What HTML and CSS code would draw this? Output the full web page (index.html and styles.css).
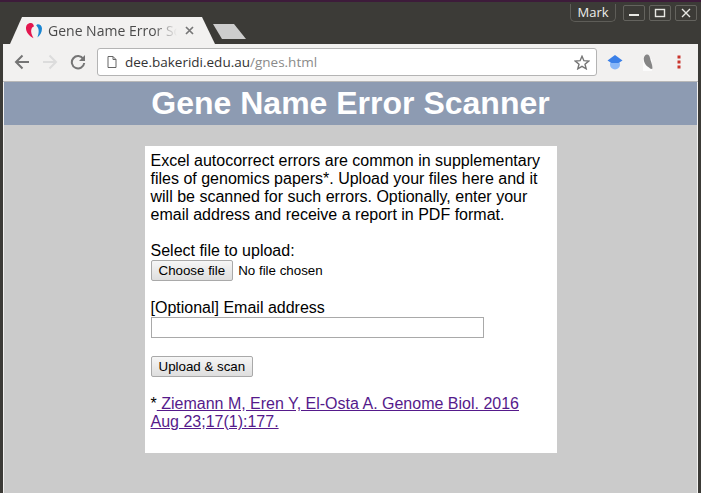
FILE: index.html
```html
<!DOCTYPE html>
<html lang="en">
<head>
	<meta charset="UTF-8" />
	<title>Gene Name Error Scanner</title>
	<link rel="stylesheet" href="styles.css">
</head>
<body>
	<div class="window">
		<div class="topbar">
			<div class="tabs">
				<div class="tab">
					<svg class="favicon" width="17" height="16" viewBox="0 0 17 16">
						<path d="M5 0C1.5 0 0 2.5 0 5.2C0 9 3 13 7.500 15.200C5.500 11.500 4.600 8.500 5.400 6.200C5.900 4.600 7 4 8 3.600C7.600 1.400 6.600 0 5 0Z" fill="#e3174f"/>
						<path d="M11.600 1.200C13.500 1 16 2.400 16 5.600C16 9.400 14 12.600 11.400 14.600C12.400 11.400 13 9 12.500 6.600C12.200 4.800 11.200 3 10.200 2.400C10.500 1.800 11 1.300 11.600 1.200Z" fill="#1b86d2"/>
					</svg>
					<span class="tab-title">Gene Name Error Scanner</span>
					<svg class="tab-close" width="9" height="9" viewBox="0 0 9 9">
						<path d="M1 1L8 8M8 1L1 8" stroke="#777" stroke-width="1.700"/>
					</svg>
				</div>
				<div class="newtab"></div>
			</div>
			<div class="controls">
				<div class="user">Mark</div>
				<div class="winbtns">
					<div class="winbtn">
						<svg width="12" height="12" viewBox="0 0 12 12"><path d="M1 8H11" stroke="#e8e8e4" stroke-width="2"/></svg>
					</div>
					<div class="winbtn">
						<svg width="12" height="12" viewBox="0 0 12 12"><rect x="1.500" y="2.500" width="9" height="7" fill="none" stroke="#e8e8e4" stroke-width="1.400"/></svg>
					</div>
					<div class="winbtn">
						<svg width="12" height="12" viewBox="0 0 12 12"><path d="M2 2L10 10M10 2L2 10" stroke="#e8e8e4" stroke-width="1.400"/></svg>
					</div>
				</div>
			</div>
		</div>

		<div class="toolbar">
			<svg class="navicon" width="16" height="16" viewBox="0 0 16 16">
				<path d="M15 8H2.500M8.500 1.500L2 8L8.500 14.500" fill="none" stroke="#757575" stroke-width="2"/>
			</svg>
			<svg class="navicon" width="16" height="16" viewBox="0 0 16 16">
				<path d="M1 8H13.500M7.500 1.500L14 8L7.500 14.500" fill="none" stroke="#dcdcdc" stroke-width="2"/>
			</svg>
			<svg class="navicon" width="16" height="16" viewBox="0 0 16 16">
				<path d="M13.300 5A6.200 6.200 0 1 0 14.200 9" fill="none" stroke="#757575" stroke-width="2"/>
				<path d="M15 1V7H9Z" fill="#757575"/>
			</svg>
			<div class="omnibox">
				<svg class="pageicon" width="10" height="12" viewBox="0 0 10 12">
					<path d="M1 .5H6L9 3.500V11.500H1ZM6 .5V3.500H9" fill="#fff" stroke="#666" stroke-width="1"/>
				</svg>
				<span class="url">dee.bakeridi.edu.au<span class="url-path">/gnes.html</span></span>
				<svg class="star" width="16" height="15" viewBox="0 0 16 15">
					<path d="M8 1.300L9.900 5.700L14.700 6.100L11 9.200L12.200 13.800L8 11.400L3.800 13.800L5 9.200L1.300 6.100L6.100 5.700Z" fill="none" stroke="#757575" stroke-width="1.400"/>
				</svg>
			</div>
			<div class="exts">
				<svg class="ext" width="16" height="15" viewBox="0 0 16 15">
					<circle cx="8" cy="9.500" r="5" fill="#8ab8f8"/>
					<path d="M8 0L15.500 5.500L11.500 8H4.500L.5 5.500Z" fill="#3b80e8"/>
				</svg>
				<svg class="ext" width="12" height="17" viewBox="0 0 12 17">
					<rect x="1" y="5" width="9" height="12" fill="#fbfbfb"/>
					<path d="M4.500 .5C6.500 0 7.500 1.500 8 4C8.500 7 10.500 10 10.500 14.500C9 15.500 8 14.500 7 13.500C4 12 1.500 8 1.800 4.500C2 2.500 3 1 4.500 .5Z" fill="#858585"/>
				</svg>
				<svg class="ext" width="4" height="14" viewBox="0 0 4 14">
					<rect x="0.500" y="0.500" width="3" height="3" fill="#c9352c"/>
					<rect x="0.500" y="5.500" width="3" height="3" fill="#c9352c"/>
					<rect x="0.500" y="10.500" width="3" height="3" fill="#c9352c"/>
				</svg>
			</div>
		</div>

		<div class="page">
			<h1 class="banner">Gene Name Error Scanner</h1>
			<div class="card">
				<p class="intro">Excel autocorrect errors are common in supplementary files of genomics papers*. Upload your files here and it will be scanned for such errors. Optionally, enter your email address and receive a report in PDF format.</p>
				<div class="field">
					<div>Select file to upload:</div>
					<div class="filerow">
						<button class="btn" type="button">Choose file</button>
						<span class="nofile">No file chosen</span>
					</div>
				</div>
				<div class="field">
					<label class="email-label" for="email">[Optional] Email address</label>
					<input class="email" id="email" type="text" />
				</div>
				<button class="btn upload" type="button">Upload &amp; scan</button>
				<p class="ref">*<a href="#"> Ziemann M, Eren Y, El-Osta A. Genome Biol. 2016 Aug 23;17(1):177.</a></p>
			</div>
		</div>
	</div>
</body>
</html>
```

FILE: styles.css
```css
html,body{
	margin:0;
	padding:0;
}
body{
	font-family:"Liberation Sans",Arial,sans-serif;
	font-size:16px;
	background:#3c3b37;
}
.window{
	width:701px;
	height:493px;
	box-sizing:border-box;
	display:flex;
	flex-direction:column;
	padding:0 3px;
	background:#3c3b37;
	border-top:2px solid #3d1b3a;
	overflow:hidden;
}

/* title bar and tabs */
.topbar{
	height:42px;
	display:flex;
	justify-content:space-between;
	flex-shrink:0;
}
.tabs{
	display:flex;
	align-items:flex-end;
	padding-left:7px;
}
.tab{
	width:205px;
	height:27px;
	box-sizing:border-box;
	display:flex;
	align-items:center;
	padding:0 18px 0 16px;
	background:#f2f1f0;
	clip-path:polygon(0 100%,12px 0,192px 0,100% 100%);
	font-family:"Open Sans","Noto Sans",sans-serif;
	font-size:14px;
	color:#4b4b4b;
}
.favicon{
	flex-shrink:0;
	margin-right:5px;
}
.tab-title{
	width:129px;
	flex-shrink:0;
	overflow:hidden;
	white-space:nowrap;
	-webkit-mask-image:linear-gradient(to right,#000 105px,transparent 129px);
	mask-image:linear-gradient(to right,#000 105px,transparent 129px);
}
.tab-close{
	margin-left:8px;
	flex-shrink:0;
}
.newtab{
	width:33px;
	height:15px;
	margin:0 0 5px -2px;
	background:#cdcdcd;
	clip-path:polygon(0 0,21px 0,100% 100%,9px 100%);
}
.controls{
	display:flex;
	align-items:flex-start;
	padding:2px 1px 0 0;
}
.user{
	width:46px;
	height:18px;
	box-sizing:border-box;
	border:1px solid #5e5d58;
	border-top:0;
	border-radius:0 0 5px 5px;
	font-family:"Open Sans","Noto Sans",sans-serif;
	font-size:13px;
	line-height:17px;
	text-align:center;
	color:#eeeeea;
	margin-right:7px;
}
.winbtns{
	display:flex;
	gap:4px;
	padding-top:1px;
}
.winbtn{
	width:22px;
	height:16px;
	box-sizing:border-box;
	display:flex;
	align-items:center;
	justify-content:center;
	border:1px solid #64635e;
	border-radius:2px;
}

/* toolbar */
.toolbar{
	height:38px;
	box-sizing:border-box;
	display:flex;
	align-items:center;
	flex-shrink:0;
	padding:0 0 1px 11px;
	background:#f2f1f0;
	border-bottom:1px solid #b8b8b8;
}
.navicon{
	margin-right:12px;
	flex-shrink:0;
}
.omnibox{
	width:500px;
	height:28px;
	box-sizing:border-box;
	display:flex;
	align-items:center;
	margin-left:-1px;
	padding:0 6px 0 9px;
	background:#fff;
	border:1px solid #b4b4b4;
	border-radius:3px;
	font-family:"Open Sans","Noto Sans",sans-serif;
	font-size:13.5px;
}
.pageicon{
	flex-shrink:0;
	margin-right:8px;
}
.url{
	flex:1;
	color:#333;
	white-space:nowrap;
}
.url-path{
	color:#8a8a8a;
}
.exts{
	display:flex;
	align-items:center;
	padding-left:10px;
}
.ext:nth-child(1){
	margin-right:19px;
}
.ext:nth-child(2){
	margin-right:23px;
}

/* page */
.page{
	flex:1;
	background:#cbcbcb;
	border-left:1px solid #f2f1f0;
	border-right:1px solid #f2f1f0;
}
.banner{
	height:43px;
	margin:0;
	background:#8d9bb2;
	color:#fff;
	font-size:32px;
	line-height:43px;
	text-align:center;
}
.card{
	width:412px;
	height:307px;
	box-sizing:border-box;
	margin:21px auto 0;
	padding:6px;
	background:#fff;
	color:#000;
}
.intro{
	margin:0 0 18px;
}
.field{
	margin-bottom:18px;
}
.filerow{
	display:flex;
	align-items:center;
}
.btn{
	height:21px;
	box-sizing:border-box;
	padding:0 7px;
	background:linear-gradient(#f6f6f6,#dedede);
	border:1px solid #a9a9a9;
	border-radius:2px;
	font-family:"Liberation Sans",Arial,sans-serif;
	font-size:13.33px;
	color:#000;
}
.nofile{
	margin-left:5px;
	font-size:13.33px;
}
.email-label{
	display:block;
}
.email{
	display:block;
	width:333px;
	height:21px;
	box-sizing:border-box;
	margin:0;
	padding:1px 2px;
	background:#fff;
	border:1px solid #a9a9a9;
}
.upload{
	display:block;
}
.ref{
	margin:18px 0 0;
}
.ref a{
	color:#551a8b;
}
```
